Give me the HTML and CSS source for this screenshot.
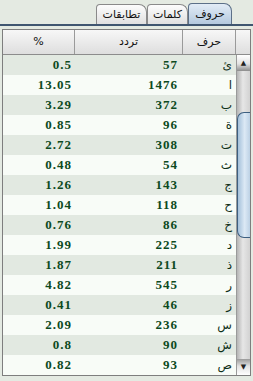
FILE: index.html
```html
<!DOCTYPE html>
<html lang="ar">
<head>
    <meta charset="UTF-8">
    <meta name="viewport" content="width=device-width, initial-scale=1.0">
    <title>Letter Frequency</title>
    <link rel="stylesheet" href="styles.css">
</head>
<body>
    <div class="tabs">
        <div class="tab active tab-letters">حروف</div>
        <div class="tab tab-words">كلمات</div>
        <div class="tab tab-matches">تطابقات</div>
    </div>

    <div class="grid">
        <div class="header">
            <div class="head-cell">%</div>
            <div class="head-cell">تردد</div>
            <div class="head-cell">حرف</div>
            <div class="head-cell corner"></div>
        </div>

        <div class="grid-body">
            <div class="rows">
                <div class="row"><span class="num pct">0.5</span><span class="num count">57</span><span class="letter">ئ</span></div>
                <div class="row"><span class="num pct">13.05</span><span class="num count">1476</span><span class="letter">ا</span></div>
                <div class="row"><span class="num pct">3.29</span><span class="num count">372</span><span class="letter">ب</span></div>
                <div class="row"><span class="num pct">0.85</span><span class="num count">96</span><span class="letter">ة</span></div>
                <div class="row"><span class="num pct">2.72</span><span class="num count">308</span><span class="letter">ت</span></div>
                <div class="row"><span class="num pct">0.48</span><span class="num count">54</span><span class="letter">ث</span></div>
                <div class="row"><span class="num pct">1.26</span><span class="num count">143</span><span class="letter">ج</span></div>
                <div class="row"><span class="num pct">1.04</span><span class="num count">118</span><span class="letter">ح</span></div>
                <div class="row"><span class="num pct">0.76</span><span class="num count">86</span><span class="letter">خ</span></div>
                <div class="row"><span class="num pct">1.99</span><span class="num count">225</span><span class="letter">د</span></div>
                <div class="row"><span class="num pct">1.87</span><span class="num count">211</span><span class="letter">ذ</span></div>
                <div class="row"><span class="num pct">4.82</span><span class="num count">545</span><span class="letter">ر</span></div>
                <div class="row"><span class="num pct">0.41</span><span class="num count">46</span><span class="letter">ز</span></div>
                <div class="row"><span class="num pct">2.09</span><span class="num count">236</span><span class="letter">س</span></div>
                <div class="row"><span class="num pct">0.8</span><span class="num count">90</span><span class="letter">ش</span></div>
                <div class="row"><span class="num pct">0.82</span><span class="num count">93</span><span class="letter">ص</span></div>
            </div>

            <div class="scrollbar">
                <div class="scroll-btn up">▲</div>
                <div class="track">
                    <div class="thumb"></div>
                </div>
                <div class="scroll-btn down">▼</div>
            </div>
        </div>
    </div>
</body>
</html>
```

FILE: styles.css
```css
body {
    margin: 0;
    width: 253px;
    height: 381px;
    overflow: hidden;
    background: #e4eae2;
    font-family: "DejaVu Sans", sans-serif;
}

/* tab strip */
.tabs {
    display: flex;
    direction: rtl;
    align-items: flex-end;
    height: 21px;
    padding: 3px 21px 0 0;
    border-bottom: 2px solid #3f5670;
}

.tab {
    box-sizing: border-box;
    height: 21px;
    border: 1px solid #8a8a8a;
    border-bottom: none;
    border-radius: 4px 8px 0 0;
    background: linear-gradient(#fdfdfd, #e0e0e0);
    font-size: 11px;
    line-height: 19px;
    text-align: center;
    color: #111;
}

.tab-letters { width: 44px; }
.tab-words { width: 41px; height: 20px; }
.tab-matches { width: 51px; height: 20px; }

.tab.active {
    border-color: #5c7088;
    background: linear-gradient(#e2ecf6, #b4c9de);
}

/* table */
.grid {
    width: 249px;
    box-sizing: border-box;
    margin: 3px 2px 0 2px;
    border: 1px solid #7e7e7e;
}

.header {
    display: grid;
    grid-template-columns: 72px 108px 53px 14px;
    height: 24px;
    border-bottom: 1px solid #8c8c8c;
    background: linear-gradient(#f7f7f7, #dedede);
}

.head-cell {
    border-right: 1px solid #9a9a9a;
    font-size: 11px;
    line-height: 24px;
    text-align: center;
    color: #111;
}

.head-cell.corner {
    border-right: none;
}

.grid-body {
    display: flex;
    height: 320px;
}

.rows {
    width: 233px;
    box-shadow: inset 1px 0 #1e1e1e;
}

.row {
    display: grid;
    grid-template-columns: 72px 108px 53px;
    height: 20px;
    line-height: 20px;
    background: #f8fcf7;
}

.row:nth-child(odd) {
    background: #e2e9e1;
}

.num {
    font-family: "Liberation Serif", serif;
    font-weight: bold;
    font-size: 13px;
    letter-spacing: 1px;
    color: #0d4a1e;
    text-align: right;
}

.pct { padding-right: 3px; }
.count { padding-right: 5px; }

.letter {
    direction: rtl;
    text-align: right;
    padding-right: 4px;
    font-size: 12px;
    color: #0f3019;
}

/* scrollbar */
.scrollbar {
    width: 14px;
    display: flex;
    flex-direction: column;
    border-left: 1px solid #9a9a9a;
}

.scroll-btn {
    height: 16px;
    font-size: 7px;
    line-height: 16px;
    text-align: center;
    color: #222;
}

.scroll-btn.up {
    background: linear-gradient(#ffffff, #e2e2e2 55%, #8c8c8c);
}

.scroll-btn.down {
    background: linear-gradient(#9a9a9a, #e2e2e2 45%, #ffffff);
}

.track {
    flex: 1;
    background: linear-gradient(to right, #b4b4b4, #e6e6e6 45%, #d2d2d2);
}

.thumb {
    margin-top: 41px;
    height: 126px;
    box-sizing: border-box;
    border: 1px solid #3d5f80;
    border-right: none;
    border-radius: 7px 0 0 7px;
    background: linear-gradient(to right, #a4c0da, #dce9f5 55%, #bcd1e5);
}
```
